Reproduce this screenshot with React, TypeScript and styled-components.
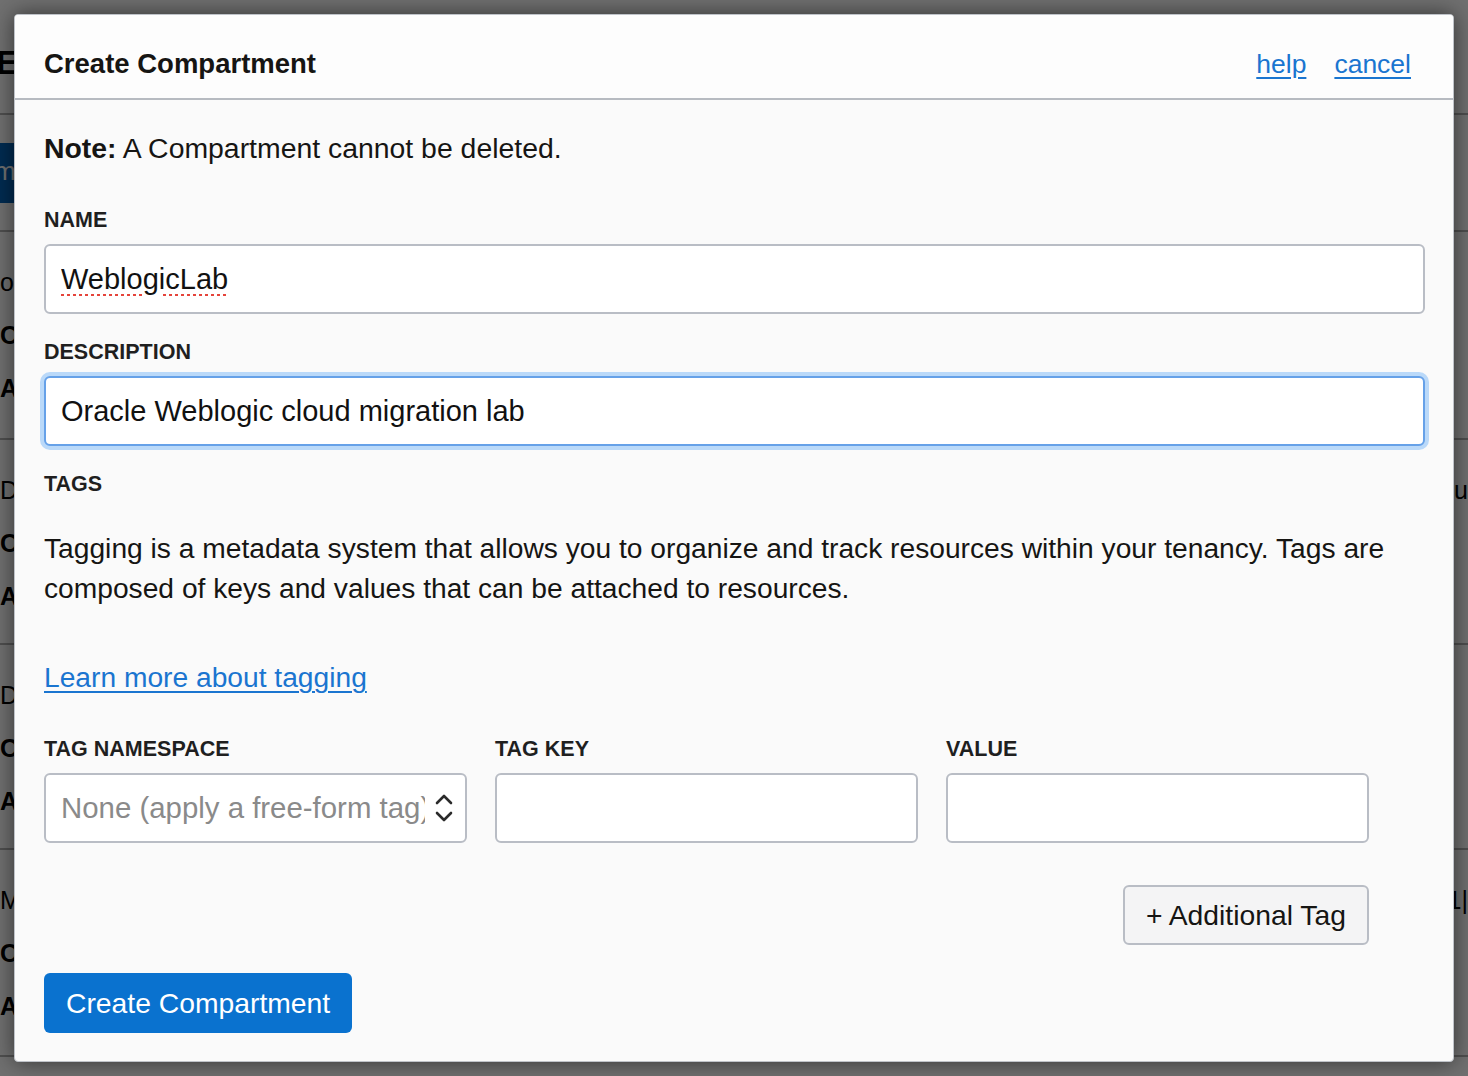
import React from "react";
import styled, { createGlobalStyle } from "styled-components";

const Global = createGlobalStyle`
  html, body { margin: 0; padding: 0; background: #ffffff; }
  body { width: 1468px; height: 1076px; overflow: hidden; font-family: "Liberation Sans", Arial, "Helvetica Neue", sans-serif; }
  * { box-sizing: border-box; }
`;

const Page = styled.div`
  position: relative;
  width: 1468px;
  height: 1076px;
  overflow: hidden;
  background: #ffffff;
`;

/* ---------- dimmed page behind the dialog ---------- */
const Backdrop = styled.div`
  display: flex;
  flex-direction: column;
  width: 100%;
`;

const BgRow = styled.div<{ $h: number }>`
  height: ${(p) => p.$h}px;
  border-bottom: 2px solid #b4b4b4;
  display: flex;
  justify-content: space-between;
  align-items: flex-start;
  padding-top: 24px;
`;

const BgHeader = styled.div`
  height: 115px;
  border-bottom: 2px solid #b4b4b4;
  display: flex;
  align-items: center;
  padding-top: 12px;
  font-size: 34px;
  font-weight: 700;
  color: #000;
`;

const BgHeading = styled.span`
  display: block;
  width: 14px;
  overflow: hidden;
  white-space: nowrap;
  text-indent: -4px;
`;

const BgButtonRow = styled.div`
  height: 117px;
  border-bottom: 2px solid #b4b4b4;
  display: flex;
  align-items: flex-start;
  padding-top: 28px;
`;

const BgButton = styled.div`
  width: 16px;
  height: 60px;
  background: #0462b8;
  color: #ffffff;
  font-size: 26px;
  line-height: 56px;
  overflow: hidden;
  white-space: nowrap;
  text-indent: -6px;
`;

const BgCol = styled.div<{ $right?: boolean }>`
  display: flex;
  flex-direction: column;
  align-items: ${(p) => (p.$right ? "flex-end" : "flex-start")};
  font-size: 25px;
  line-height: 53px;
  color: #000;
`;

const BgText = styled.span<{ $bold?: boolean }>`
  font-weight: ${(p) => (p.$bold ? 700 : 400)};
  white-space: nowrap;
`;

const Overlay = styled.div`
  position: absolute;
  inset: 0;
  background: rgba(0, 0, 0, 0.56);
  display: flex;
  align-items: flex-start;
  padding: 14px;
`;

/* ---------- dialog ---------- */
const Modal = styled.div`
  width: 1440px;
  height: 1048px;
  background: #fafafa;
  border: 1px solid #bfc3c9;
  border-radius: 4px;
  box-shadow: 0 0 22px rgba(0, 0, 0, 0.55);
  display: flex;
  flex-direction: column;
  overflow: hidden;
  color: #161513;
`;

const Header = styled.header`
  height: 85px;
  flex: none;
  background: #fdfdfd;
  border-bottom: 2px solid #b7bbc1;
  display: flex;
  align-items: center;
  justify-content: space-between;
  padding: 14px 42px 0 29px;
`;

const Title = styled.h1`
  margin: 0;
  font-size: 27.5px;
  font-weight: 700;
  color: #161513;
`;

const HeaderLinks = styled.div`
  display: flex;
  gap: 28px;
  padding-top: 2px;
`;

const Link = styled.a<{ $size?: number }>`
  color: #1a75d0;
  text-decoration: underline;
  text-underline-offset: 4px;
  text-decoration-thickness: 1.5px;
  font-size: ${(p) => p.$size ?? 26.5}px;
  cursor: pointer;
`;

const Body = styled.div`
  display: flex;
  flex-direction: column;
  padding: 28px 28px 0 29px;
`;

const Note = styled.p`
  margin: 0;
  font-size: 28.4px;
  line-height: 40px;
  color: #161513;
  b { font-weight: 700; }
`;

const Label = styled.label<{ $mt: number }>`
  display: block;
  margin-top: ${(p) => p.$mt}px;
  font-size: 21.5px;
  line-height: 26px;
  font-weight: 700;
  color: #1f1f1f;
`;

const TextInput = styled.input<{ $focused?: boolean; $spell?: boolean }>`
  display: block;
  width: 100%;
  height: 70px;
  margin-top: 11px;
  padding: 0 15px;
  border: 2px solid ${(p) => (p.$focused ? "#66a1e8" : "#b9bdc5")};
  border-radius: 6px;
  background: #ffffff;
  font-family: "Liberation Sans", Arial, sans-serif;
  font-size: 29px;
  color: #111111;
  outline: none;
  box-shadow: ${(p) => (p.$focused ? "0 0 0 4px #bad9f9" : "none")};
  text-decoration-line: ${(p) => (p.$spell ? "underline" : "none")};
  text-decoration-style: dotted;
  text-decoration-color: #e5443b;
  text-decoration-thickness: 3px;
  text-underline-offset: 5px;
`;

const Paragraph = styled.p`
  margin: 31px 0 0;
  font-size: 28.2px;
  line-height: 40px;
  color: #161513;
  max-width: 1380px;
`;

const LinkLine = styled.div`
  margin-top: 49px;
  line-height: 40px;
`;

const TagGrid = styled.div`
  display: grid;
  grid-template-columns: repeat(3, 423px);
  column-gap: 28px;
  margin-top: 34px;
`;

const TagCell = styled.div`
  display: flex;
  flex-direction: column;
`;

const TagLabel = styled.span`
  font-size: 21.5px;
  line-height: 26px;
  font-weight: 700;
  color: #1f1f1f;
`;

const TagInput = styled.input`
  display: block;
  width: 100%;
  height: 70px;
  margin-top: 11px;
  border: 2px solid #b9bdc5;
  border-radius: 6px;
  background: #ffffff;
  padding: 0 15px;
  font-family: "Liberation Sans", Arial, sans-serif;
  font-size: 29px;
  outline: none;
`;

const SelectBox = styled.div`
  height: 70px;
  margin-top: 11px;
  border: 2px solid #b9bdc5;
  border-radius: 6px;
  background: #ffffff;
  display: flex;
  align-items: center;
  padding: 0 12px 0 15px;
  gap: 10px;
`;

const SelectText = styled.span`
  flex: 1;
  overflow: hidden;
  white-space: nowrap;
  font-size: 29.4px;
  color: #8a8a8a;
`;

const ActionsRow = styled.div`
  width: 1325px;
  display: flex;
  justify-content: flex-end;
  margin-top: 42px;
`;

const SecondaryButton = styled.button`
  height: 60px;
  padding: 0 21px;
  border: 2px solid #b9bdc5;
  border-radius: 6px;
  background: #f4f4f5;
  font-family: "Liberation Sans", Arial, sans-serif;
  font-size: 28.3px;
  color: #161513;
  cursor: pointer;
`;

const PrimaryButton = styled.button`
  align-self: flex-start;
  height: 60px;
  margin-top: 28px;
  padding: 0 22px;
  border: none;
  border-radius: 6px;
  background: #0a72cf;
  font-family: "Liberation Sans", Arial, sans-serif;
  font-size: 28.3px;
  color: #ffffff;
  cursor: pointer;
`;

const Chevrons = () => (
  <svg width="18" height="32" viewBox="0 0 18 32" fill="none" stroke="#2b2b2b" strokeWidth="2.6" strokeLinecap="round" strokeLinejoin="round">
    <polyline points="2,11 9,4 16,11" />
    <polyline points="2,21 9,28 16,21" />
  </svg>
);

export default function App() {
  return (
    <Page>
      <Global />
      <Backdrop>
        <BgHeader>
          <BgHeading>Ei</BgHeading>
        </BgHeader>
        <BgButtonRow>
          <BgButton>m</BgButton>
        </BgButtonRow>
        <BgRow $h={208}>
          <BgCol>
            <BgText>o</BgText>
            <BgText $bold>O</BgText>
            <BgText $bold>A</BgText>
          </BgCol>
        </BgRow>
        <BgRow $h={205}>
          <BgCol>
            <BgText>D</BgText>
            <BgText $bold>O</BgText>
            <BgText $bold>A</BgText>
          </BgCol>
          <BgCol $right>
            <BgText>u</BgText>
          </BgCol>
        </BgRow>
        <BgRow $h={205}>
          <BgCol>
            <BgText>D</BgText>
            <BgText $bold>O</BgText>
            <BgText $bold>A</BgText>
          </BgCol>
        </BgRow>
        <BgRow $h={207}>
          <BgCol>
            <BgText>M</BgText>
            <BgText $bold>O</BgText>
            <BgText $bold>A</BgText>
          </BgCol>
          <BgCol $right>
            <BgText>1|</BgText>
          </BgCol>
        </BgRow>
      </Backdrop>

      <Overlay>
        <Modal role="dialog" aria-label="Create Compartment">
          <Header>
            <Title>Create Compartment</Title>
            <HeaderLinks>
              <Link>help</Link>
              <Link>cancel</Link>
            </HeaderLinks>
          </Header>
          <Body>
            <Note>
              <b>Note:</b> A Compartment cannot be deleted.
            </Note>

            <Label $mt={39}>NAME</Label>
            <TextInput $spell defaultValue="WeblogicLab" spellCheck={false} />

            <Label $mt={25}>DESCRIPTION</Label>
            <TextInput $focused defaultValue="Oracle Weblogic cloud migration lab" spellCheck={false} />

            <Label $mt={25}>TAGS</Label>
            <Paragraph>
              Tagging is a metadata system that allows you to organize and track resources within your tenancy. Tags are
              composed of keys and values that can be attached to resources.
            </Paragraph>

            <LinkLine>
              <Link $size={28.2}>Learn more about tagging</Link>
            </LinkLine>

            <TagGrid>
              <TagCell>
                <TagLabel>TAG NAMESPACE</TagLabel>
                <SelectBox>
                  <SelectText>None (apply a free-form tag)</SelectText>
                  <Chevrons />
                </SelectBox>
              </TagCell>
              <TagCell>
                <TagLabel>TAG KEY</TagLabel>
                <TagInput />
              </TagCell>
              <TagCell>
                <TagLabel>VALUE</TagLabel>
                <TagInput />
              </TagCell>
            </TagGrid>

            <ActionsRow>
              <SecondaryButton>+ Additional Tag</SecondaryButton>
            </ActionsRow>

            <PrimaryButton>Create Compartment</PrimaryButton>
          </Body>
        </Modal>
      </Overlay>
    </Page>
  );
}
